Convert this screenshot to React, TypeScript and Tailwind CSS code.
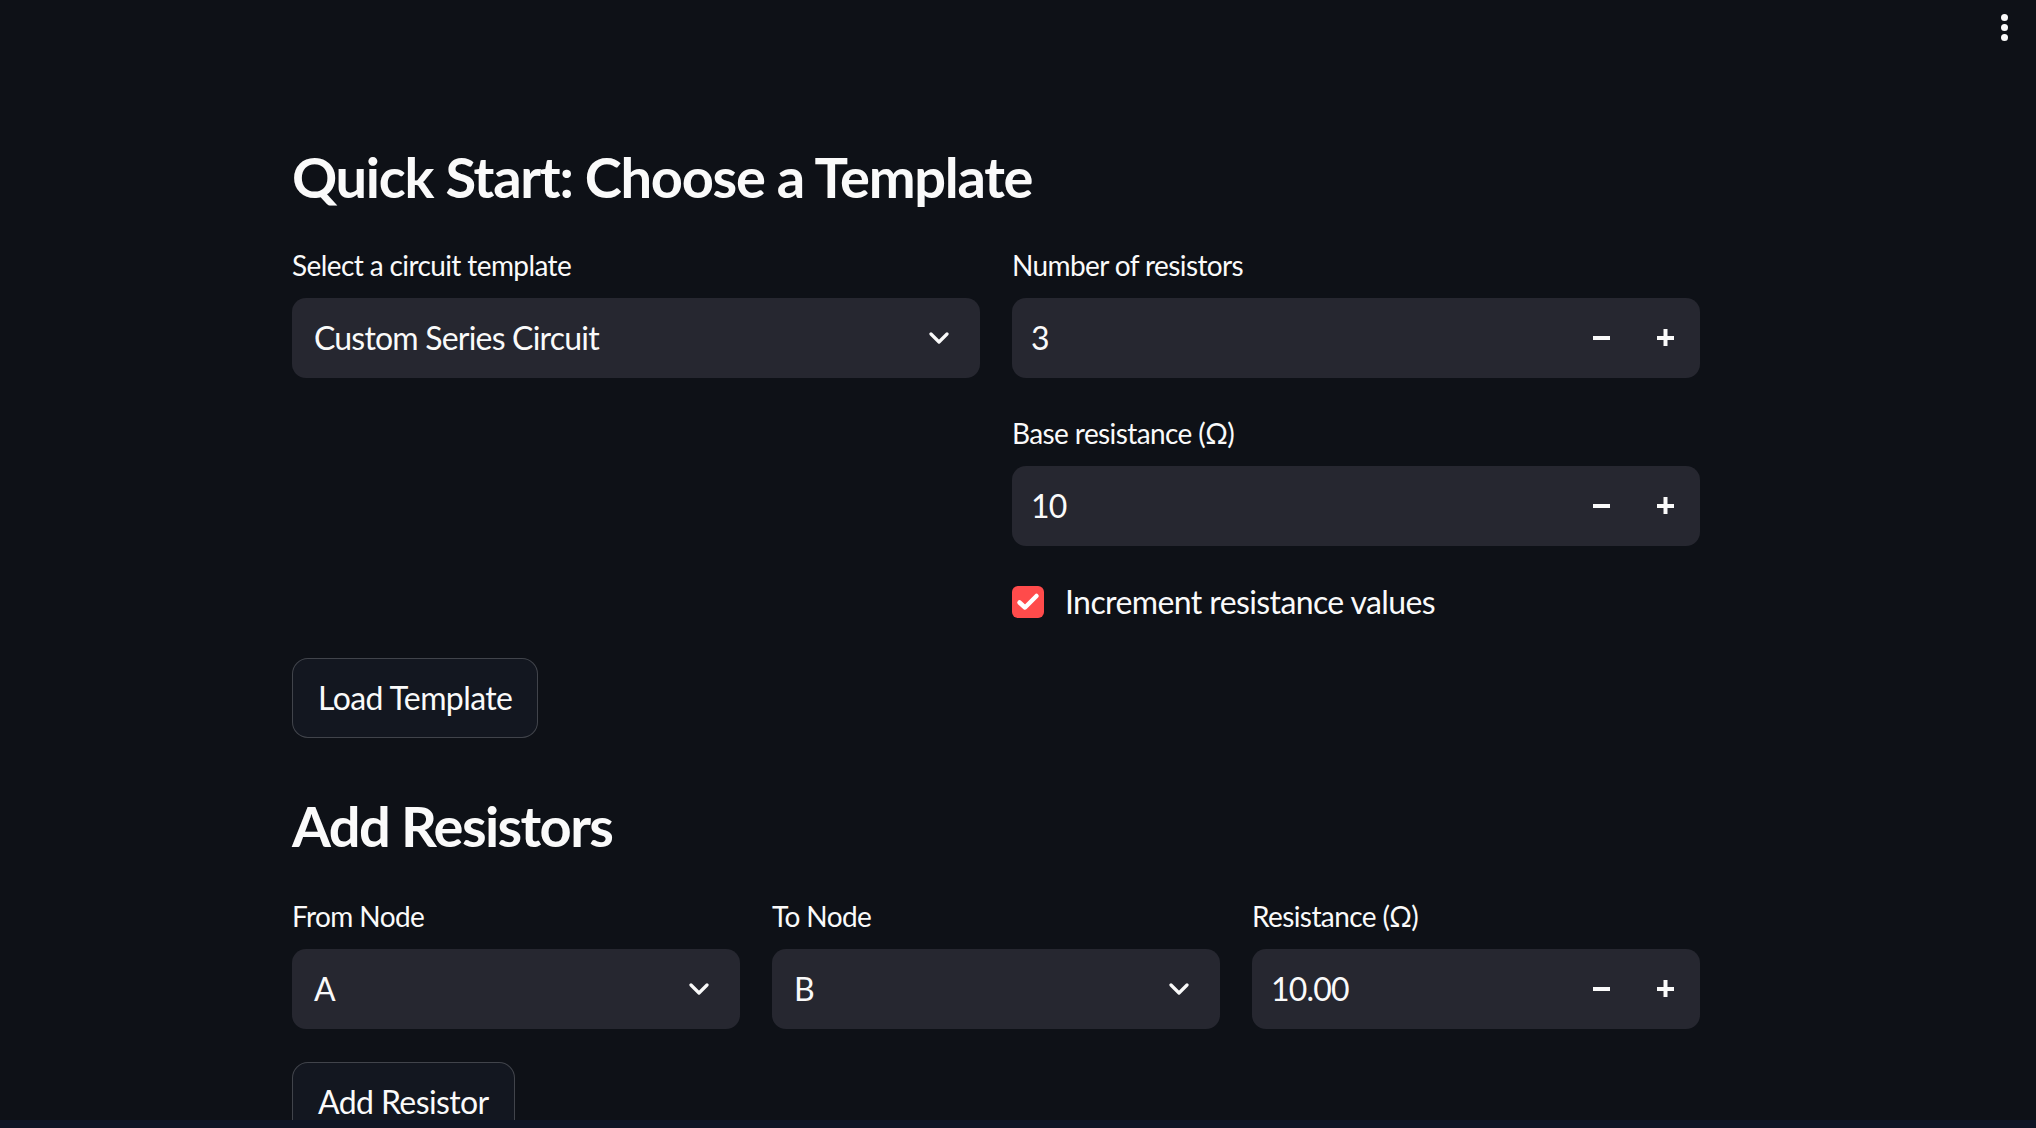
import React from "react";

const font = { fontFamily: "Lato, 'Noto Sans', sans-serif" };

function Label({ children }: { children: React.ReactNode }) {
  return (
    <div className="h-[34px] mb-[16px] text-[28px] leading-[34px] tracking-[-0.6px] text-[#fafafa]">{children}</div>
  );
}

function Chevron() {
  return (
    <svg width="20" height="12" viewBox="0 0 20 12" fill="none">
      <path d="M2 2 L10 10 L18 2" stroke="#fafafa" strokeWidth="3.2" strokeLinecap="round" strokeLinejoin="round" />
    </svg>
  );
}

function Select({ value }: { value: string }) {
  return (
    <div className="h-[80px] rounded-[14px] bg-[#262730] flex items-center justify-between pl-[22px] pr-[31px]">
      <span className="text-[32px] tracking-[-0.8px] text-[#fafafa]">{value}</span>
      <Chevron />
    </div>
  );
}

function NumberInput({ value }: { value: string }) {
  return (
    <div className="h-[80px] rounded-[14px] bg-[#262730] flex items-center pl-[19px]">
      <span className="flex-1 text-[32px] tracking-[-0.8px] text-[#fafafa]">{value}</span>
      <div className="w-[64px] h-full flex items-center justify-center">
        <svg width="18" height="18" viewBox="0 0 18 18">
          <rect x="0" y="7" width="17" height="4" fill="#fafafa" />
        </svg>
      </div>
      <div className="w-[64px] mr-[2px] h-full flex items-center justify-center">
        <svg width="18" height="18" viewBox="0 0 18 18">
          <rect x="0" y="7" width="17" height="4" fill="#fafafa" />
          <rect x="6.5" y="0" width="4" height="17" fill="#fafafa" />
        </svg>
      </div>
    </div>
  );
}

function Button({ children }: { children: React.ReactNode }) {
  return (
    <button className="h-[80px] px-[25px] rounded-[16px] border border-[rgba(250,250,250,0.2)] bg-[#131720] text-[32px] tracking-[-0.6px] text-[#fafafa]">
      {children}
    </button>
  );
}

export default function App() {
  return (
    <div className="relative h-screen w-full overflow-hidden bg-[#0e1117]" style={font}>
      <div className="absolute top-[14px] right-[28px] flex flex-col gap-[3px]">
        <div className="w-[7px] h-[7px] rounded-full bg-[#fafafa]" />
        <div className="w-[7px] h-[7px] rounded-full bg-[#fafafa]" />
        <div className="w-[7px] h-[7px] rounded-full bg-[#fafafa]" />
      </div>

      <div className="ml-[292px] w-[1408px] pt-[143px]">
        <h3 className="text-[56px] leading-[67px] font-bold tracking-[-1.3px] text-[#fafafa]">Quick Start: Choose a Template</h3>

        <div className="mt-[38px] grid grid-cols-2 gap-x-[32px]">
          <div>
            <Label>Select a circuit template</Label>
            <Select value="Custom Series Circuit" />
          </div>
          <div>
            <Label>Number of resistors</Label>
            <NumberInput value="3" />
            <div className="mt-[38px]">
              <Label>Base resistance (Ω)</Label>
              <NumberInput value="10" />
            </div>
            <div className="mt-[40px] h-[32px] flex items-center gap-[21px]">
              <div className="w-[32px] h-[32px] rounded-[6px] bg-[#ff4b4b] flex items-center justify-center">
                <svg width="32" height="32" viewBox="0 0 32 32" fill="none">
                  <path d="M7.5 16.5 L13 21.5 L24.5 10" stroke="#ffffff" strokeWidth="4.5" strokeLinecap="round" strokeLinejoin="round" />
                </svg>
              </div>
              <span className="text-[32px] leading-[32px] tracking-[-0.6px] text-[#fafafa]">Increment resistance values</span>
            </div>
          </div>
        </div>

        <div className="mt-[40px]">
          <Button>Load Template</Button>
        </div>

        <h3 className="mt-[54px] text-[56px] leading-[67px] font-bold tracking-[-1.6px] text-[#fafafa]">Add Resistors</h3>

        <div className="mt-[40px] grid grid-cols-3 gap-x-[32px]">
          <div>
            <Label>From Node</Label>
            <Select value="A" />
          </div>
          <div>
            <Label>To Node</Label>
            <Select value="B" />
          </div>
          <div>
            <Label>Resistance (Ω)</Label>
            <NumberInput value="10.00" />
          </div>
        </div>

        <div className="mt-[33px]">
          <Button>Add Resistor</Button>
        </div>
      </div>

      <div className="fixed bottom-0 left-0 right-0 h-[8px] bg-[#0e1525]" />
    </div>
  );
}
